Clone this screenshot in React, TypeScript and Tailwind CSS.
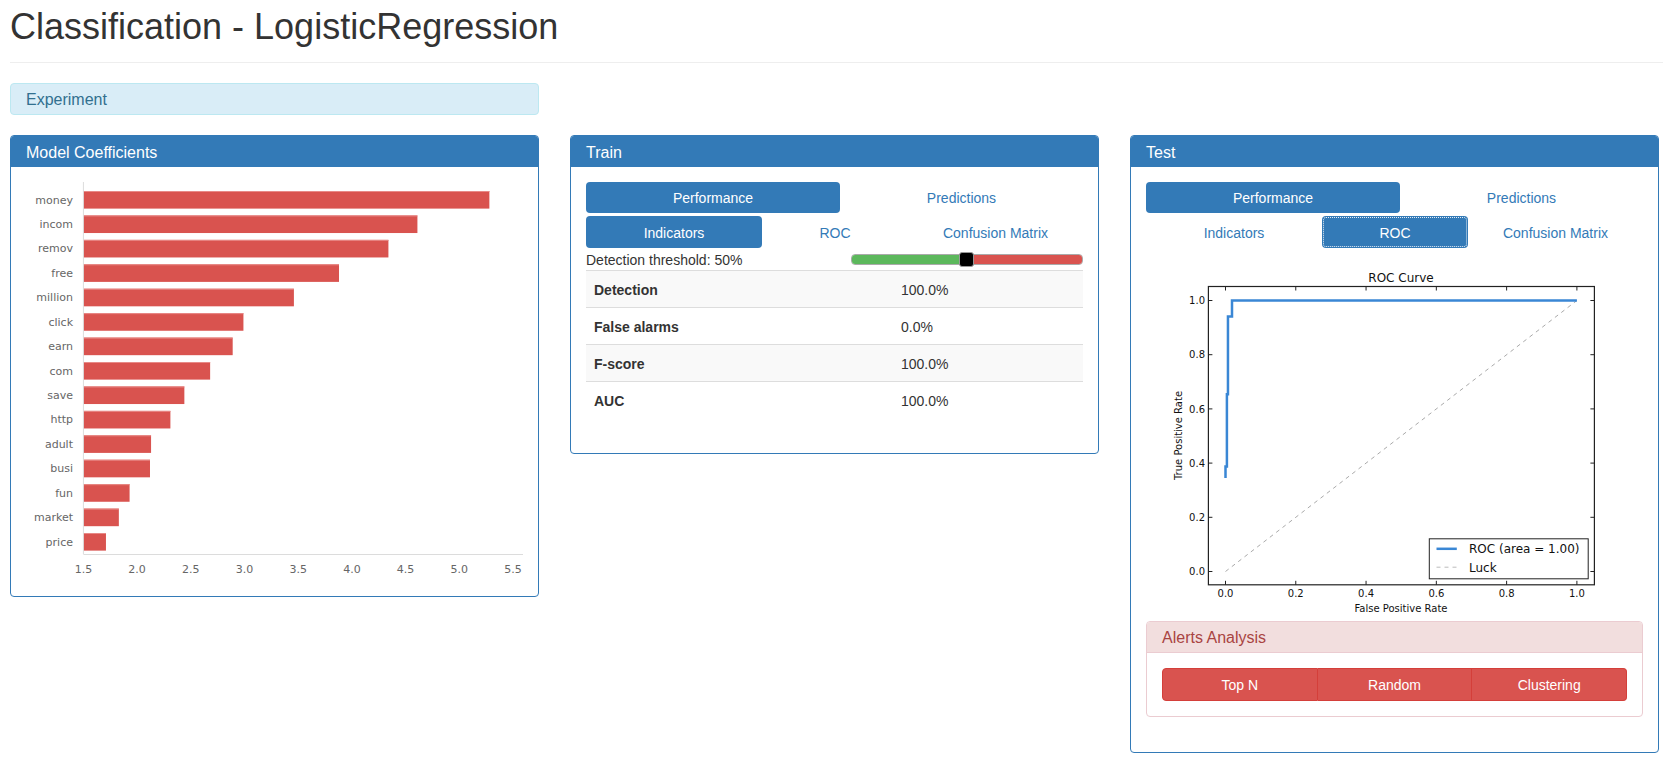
import React from 'react';

const coefficients: [string, number][] = [
  ['money', 5.28],
  ['incom', 4.61],
  ['remov', 4.34],
  ['free', 3.88],
  ['million', 3.46],
  ['click', 2.99],
  ['earn', 2.89],
  ['com', 2.68],
  ['save', 2.44],
  ['http', 2.31],
  ['adult', 2.13],
  ['busi', 2.12],
  ['fun', 1.93],
  ['market', 1.83],
  ['price', 1.71],
];

const indicators: [string, string][] = [
  ['Detection', '100.0%'],
  ['False alarms', '0.0%'],
  ['F-score', '100.0%'],
  ['AUC', '100.0%'],
];

const Panel: React.FC<{ title: string; children: React.ReactNode }> = ({ title, children }) => (
  <div className="border border-[#337ab7] rounded-[4px] bg-white">
    <div className="h-[31px] bg-[#337ab7] text-white text-[16px] px-[15px] pt-[2px] flex items-center rounded-t-[3px]">
      {title}
    </div>
    <div className="p-[15px]">{children}</div>
  </div>
);

const CoefChart: React.FC = () => {
  const x0 = 57.4;
  const unit = 107.4;
  const sx = (v: number) => x0 + (v - 1.5) * unit;
  const ticks = [1.5, 2.0, 2.5, 3.0, 3.5, 4.0, 4.5, 5.0, 5.5];

  return (
    <svg width={497} height={399} className="block" fontFamily="'DejaVu Sans', sans-serif">
      {coefficients.map(([name, value], i) => {
        const top = 9 + i * 24.43;
        return (
          <g key={name}>
            <rect x={x0} y={top} width={sx(value) - x0} height={17.6} fill="#d9534f" />
            <line x1={x0} y1={top + 0.5} x2={sx(value)} y2={top + 0.5} stroke="#e88a87" strokeWidth={1} />
            <text x={47} y={top + 12.5} textAnchor="end" fontSize={11} fill="#666">
              {name}
            </text>
          </g>
        );
      })}
      <line x1={x0} y1={0} x2={x0} y2={372} stroke="#dcdcdc" />
      <line x1={x0} y1={372.5} x2={497} y2={372.5} stroke="#dcdcdc" />
      {ticks.map((t) => (
        <text key={t} x={sx(t)} y={391} textAnchor="middle" fontSize={11} fill="#666">
          {t.toFixed(1)}
        </text>
      ))}
    </svg>
  );
};

const RocChart: React.FC = () => {
  const X = (v: number) => 79.5 + v * 351.4;
  const Y = (v: number) => 322 - v * 271;
  const curve: [number, number][] = [
    [0, 0.345],
    [0, 0.387],
    [0.004, 0.387],
    [0.004, 0.654],
    [0.007, 0.654],
    [0.007, 0.941],
    [0.0185, 0.941],
    [0.0185, 1],
    [1, 1],
  ];
  const ticks = [0, 0.2, 0.4, 0.6, 0.8, 1.0];
  const left = 62.4;
  const right = 448.4;
  const top = 37;
  const bottom = 335.3;

  return (
    <svg width={498} height={373} className="block" fontFamily="'DejaVu Sans', sans-serif" fill="#111">
      <g transform="translate(0 1.5)">
        <text x={255} y={32} textAnchor="middle" fontSize={12}>
          ROC Curve
        </text>
        <line x1={X(0)} y1={Y(0)} x2={X(1)} y2={Y(1)} stroke="#aaa" strokeWidth={1} strokeDasharray="4 4" />
        <polyline
          points={curve.map(([a, b]) => `${X(a)},${Y(b)}`).join(' ')}
          fill="none"
          stroke="#3a87d5"
          strokeWidth={2.5}
        />
        <rect x={left} y={top} width={right - left} height={bottom - top} fill="none" stroke="#222" strokeWidth={1.2} />
        {ticks.map((t) => (
          <g key={t}>
            <line x1={X(t)} y1={bottom} x2={X(t)} y2={bottom - 4} stroke="#222" />
            <line x1={X(t)} y1={top} x2={X(t)} y2={top + 4} stroke="#222" />
            <line x1={left} y1={Y(t)} x2={left + 4} y2={Y(t)} stroke="#222" />
            <line x1={right} y1={Y(t)} x2={right - 4} y2={Y(t)} stroke="#222" />
            <text x={X(t)} y={347.5} textAnchor="middle" fontSize={10}>
              {t.toFixed(1)}
            </text>
            <text x={59} y={Y(t) + 3.6} textAnchor="end" fontSize={10}>
              {t.toFixed(1)}
            </text>
          </g>
        ))}
        <text x={255} y={362.3} textAnchor="middle" fontSize={10}>
          False Positive Rate
        </text>
        <text transform="translate(35.6 186) rotate(-90)" textAnchor="middle" fontSize={10}>
          True Positive Rate
        </text>
        <rect x={283.3} y={289.3} width={158.9} height={40} fill="white" stroke="#222" strokeWidth={1} />
        <line x1={290.5} y1={299.3} x2={310.8} y2={299.3} stroke="#3a87d5" strokeWidth={2.5} />
        <text x={323} y={303.6} fontSize={12}>
          ROC (area = 1.00)
        </text>
        <line x1={290.5} y1={317.7} x2={310.8} y2={317.7} stroke="#bbb" strokeWidth={1} strokeDasharray="4 4" />
        <text x={323} y={322} fontSize={12}>
          Luck
        </text>
      </g>
    </svg>
  );
};

const NavRows: React.FC<{ active: 'Indicators' | 'ROC' }> = ({ active }) => {
  const sub = ['Indicators', 'ROC', 'Confusion Matrix'];
  return (
    <>
      <div className="grid grid-cols-[254px_1fr] h-[31px]">
        <div className="bg-[#337ab7] text-white rounded-[4px] pt-[2px] flex items-center justify-center">Performance</div>
        <div className="text-[#337ab7] pt-[2px] flex items-center justify-center">Predictions</div>
      </div>
      <div className="grid grid-cols-[176px_146px_1fr] h-[32px] mt-[3px]">
        {sub.map((s) => (
          <div
            key={s}
            className={
              s === active
                ? active === 'ROC'
                  ? 'bg-[#337ab7] text-white rounded-[4px] pt-[2px] flex items-center justify-center outline-1 outline-dotted outline-[#e6eef7] -outline-offset-2'
                  : 'bg-[#337ab7] text-white rounded-[4px] pt-[2px] flex items-center justify-center'
                : 'text-[#337ab7] pt-[2px] flex items-center justify-center'
            }
          >
            {s}
          </div>
        ))}
      </div>
    </>
  );
};

const App: React.FC = () => {
  return (
    <div className="min-h-screen bg-white text-[#333] text-[14px] font-['Liberation_Sans',Arial,sans-serif]">
      <div className="pl-[10px]">
        <div className="pt-[7px] pb-[15px] border-b border-[#eee]">
          <h1 className="text-[36px] leading-[40px] font-normal">Classification - LogisticRegression</h1>
        </div>
      </div>

      <div className="pl-[10px] pr-[4px] pt-[20px]">
        <div className="w-[529px] h-[32px] border border-[#bce8f1] bg-[#d9edf7] text-[#31708f] rounded-[4px] px-[15px] pt-[2px] flex items-center text-[16px]">
          Experiment
        </div>

        <div className="grid grid-cols-[529px_529px_529px] gap-x-[31px] items-start mt-[20px]">
          <Panel title="Model Coefficients">
            <CoefChart />
          </Panel>

          <Panel title="Train">
            <NavRows active="Indicators" />
            <div className="h-[22px] flex items-center justify-between">
              <span className="pt-[2px]">Detection threshold: 50%</span>
              <div className="relative w-[232px] h-[11px]">
                <div className="absolute inset-0 flex rounded-[4px] border border-[#aaa] overflow-hidden">
                  <div className="w-[108px] bg-[#5cb85c]" />
                  <div className="flex-1 bg-[#d9534f]" />
                </div>
                <div className="absolute left-[108px] top-[-2px] w-[15px] h-[15px] bg-black border border-[#999] rounded-[3px]" />
              </div>
            </div>
            <div className="mb-[20px]">
              {indicators.map(([label, value], i) => (
                <div
                  key={label}
                  className={`grid grid-cols-[307px_1fr] h-[37px] pt-[2px] items-center border-t border-[#ddd] ${
                    i % 2 === 0 ? 'bg-[#f9f9f9]' : ''
                  }`}
                >
                  <div className="px-[8px] font-bold">{label}</div>
                  <div className="px-[8px]">{value}</div>
                </div>
              ))}
            </div>
          </Panel>

          <Panel title="Test">
            <NavRows active="ROC" />
            <RocChart />
            <div className="border border-[#ebccd1] rounded-[4px] mb-[20px]">
              <div className="h-[31px] bg-[#f2dede] text-[#a94442] text-[16px] px-[15px] pt-[2px] flex items-center border-b border-[#ebccd1] rounded-t-[3px]">
                Alerts Analysis
              </div>
              <div className="p-[15px]">
                <div className="flex h-[33px]">
                  <button className="flex-1 pt-[2px] bg-[#d9534f] text-white border border-[#d43f3a] rounded-l-[4px]">Top N</button>
                  <button className="flex-1 pt-[2px] bg-[#d9534f] text-white border border-l-0 border-[#d43f3a]">Random</button>
                  <button className="flex-1 pt-[2px] bg-[#d9534f] text-white border border-l-0 border-[#d43f3a] rounded-r-[4px]">
                    Clustering
                  </button>
                </div>
              </div>
            </div>
          </Panel>
        </div>
      </div>
    </div>
  );
};

export default App;
